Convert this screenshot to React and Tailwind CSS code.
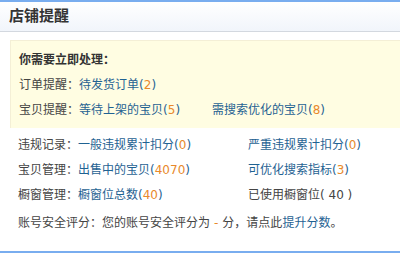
import React from "react";

// 店铺提醒面板
const font = { fontFamily: '"DejaVu Sans", "Noto Sans CJK SC", sans-serif' };

const Link = ({ text, num }) => (
    <span>
        <a href="#" className="text-[#1f6292]">{text}</a>
        <span className="text-[#1f6292]">(</span>
        <span className="text-[#e8892b]">{num}</span>
        <span className="text-[#1f6292]">)</span>
    </span>
);

const Row = ({ label, children }) => (
    <div className="flex items-center h-[25px] whitespace-nowrap">
        <span className="text-[#444]">{label}：</span>
        {children}
    </div>
);

export default function App() {
    return (
        <div className="w-[400px] h-[253px] bg-white flex flex-col text-[12px]" style={font}>
            {/* header */}
            <div className="h-[32px] border-t-2 border-[#79adef] border-b border-b-[#d3d8df] bg-gradient-to-b from-white to-[#f1f5fb] flex items-center px-[9px]">
                <span className="text-[15px] font-bold text-[#333]">店铺提醒</span>
            </div>

            {/* 立即处理 */}
            <div className="ml-[10px] mt-[8px] bg-[#fffde2] border-t border-l border-[#f4efd6] pl-[8px] pt-[6px] pb-[6px]">
                <div className="flex items-center h-[25px] font-bold text-[#333]">你需要立即处理：</div>
                <Row label="订单提醒">
                    <Link text="待发货订单" num="2" />
                </Row>
                <div className="grid grid-cols-[193px_1fr]">
                    <Row label="宝贝提醒">
                        <Link text="等待上架的宝贝" num="5" />
                    </Row>
                    <div className="flex items-center h-[25px]">
                        <Link text="需搜索优化的宝贝" num="8" />
                    </div>
                </div>
            </div>

            {/* 其它 */}
            <div className="flex-1 flex flex-col pl-[18px] pt-[4px] border-b-2 border-[#79adef]">
                <div className="grid grid-cols-[230px_1fr]">
                    <Row label="违规记录">
                        <Link text="一般违规累计扣分" num="0" />
                    </Row>
                    <div className="flex items-center h-[25px]">
                        <Link text="严重违规累计扣分" num="0" />
                    </div>
                    <Row label="宝贝管理">
                        <Link text="出售中的宝贝" num="4070" />
                    </Row>
                    <div className="flex items-center h-[25px]">
                        <Link text="可优化搜索指标" num="3" />
                    </div>
                    <Row label="橱窗管理">
                        <Link text="橱窗位总数" num="40" />
                    </Row>
                    <div className="flex items-center h-[25px] text-[#444]">已使用橱窗位( 40 )</div>
                </div>
                <div className="flex items-center h-[25px] mt-[3px] whitespace-nowrap text-[#444]">
                    账号安全评分：您的账号安全评分为
                    <span className="text-[#e8892b] mx-[4px]">-</span>
                    分，请点此<a href="#" className="text-[#1f6292]">提升分数</a>。
                </div>
            </div>
        </div>
    );
}
